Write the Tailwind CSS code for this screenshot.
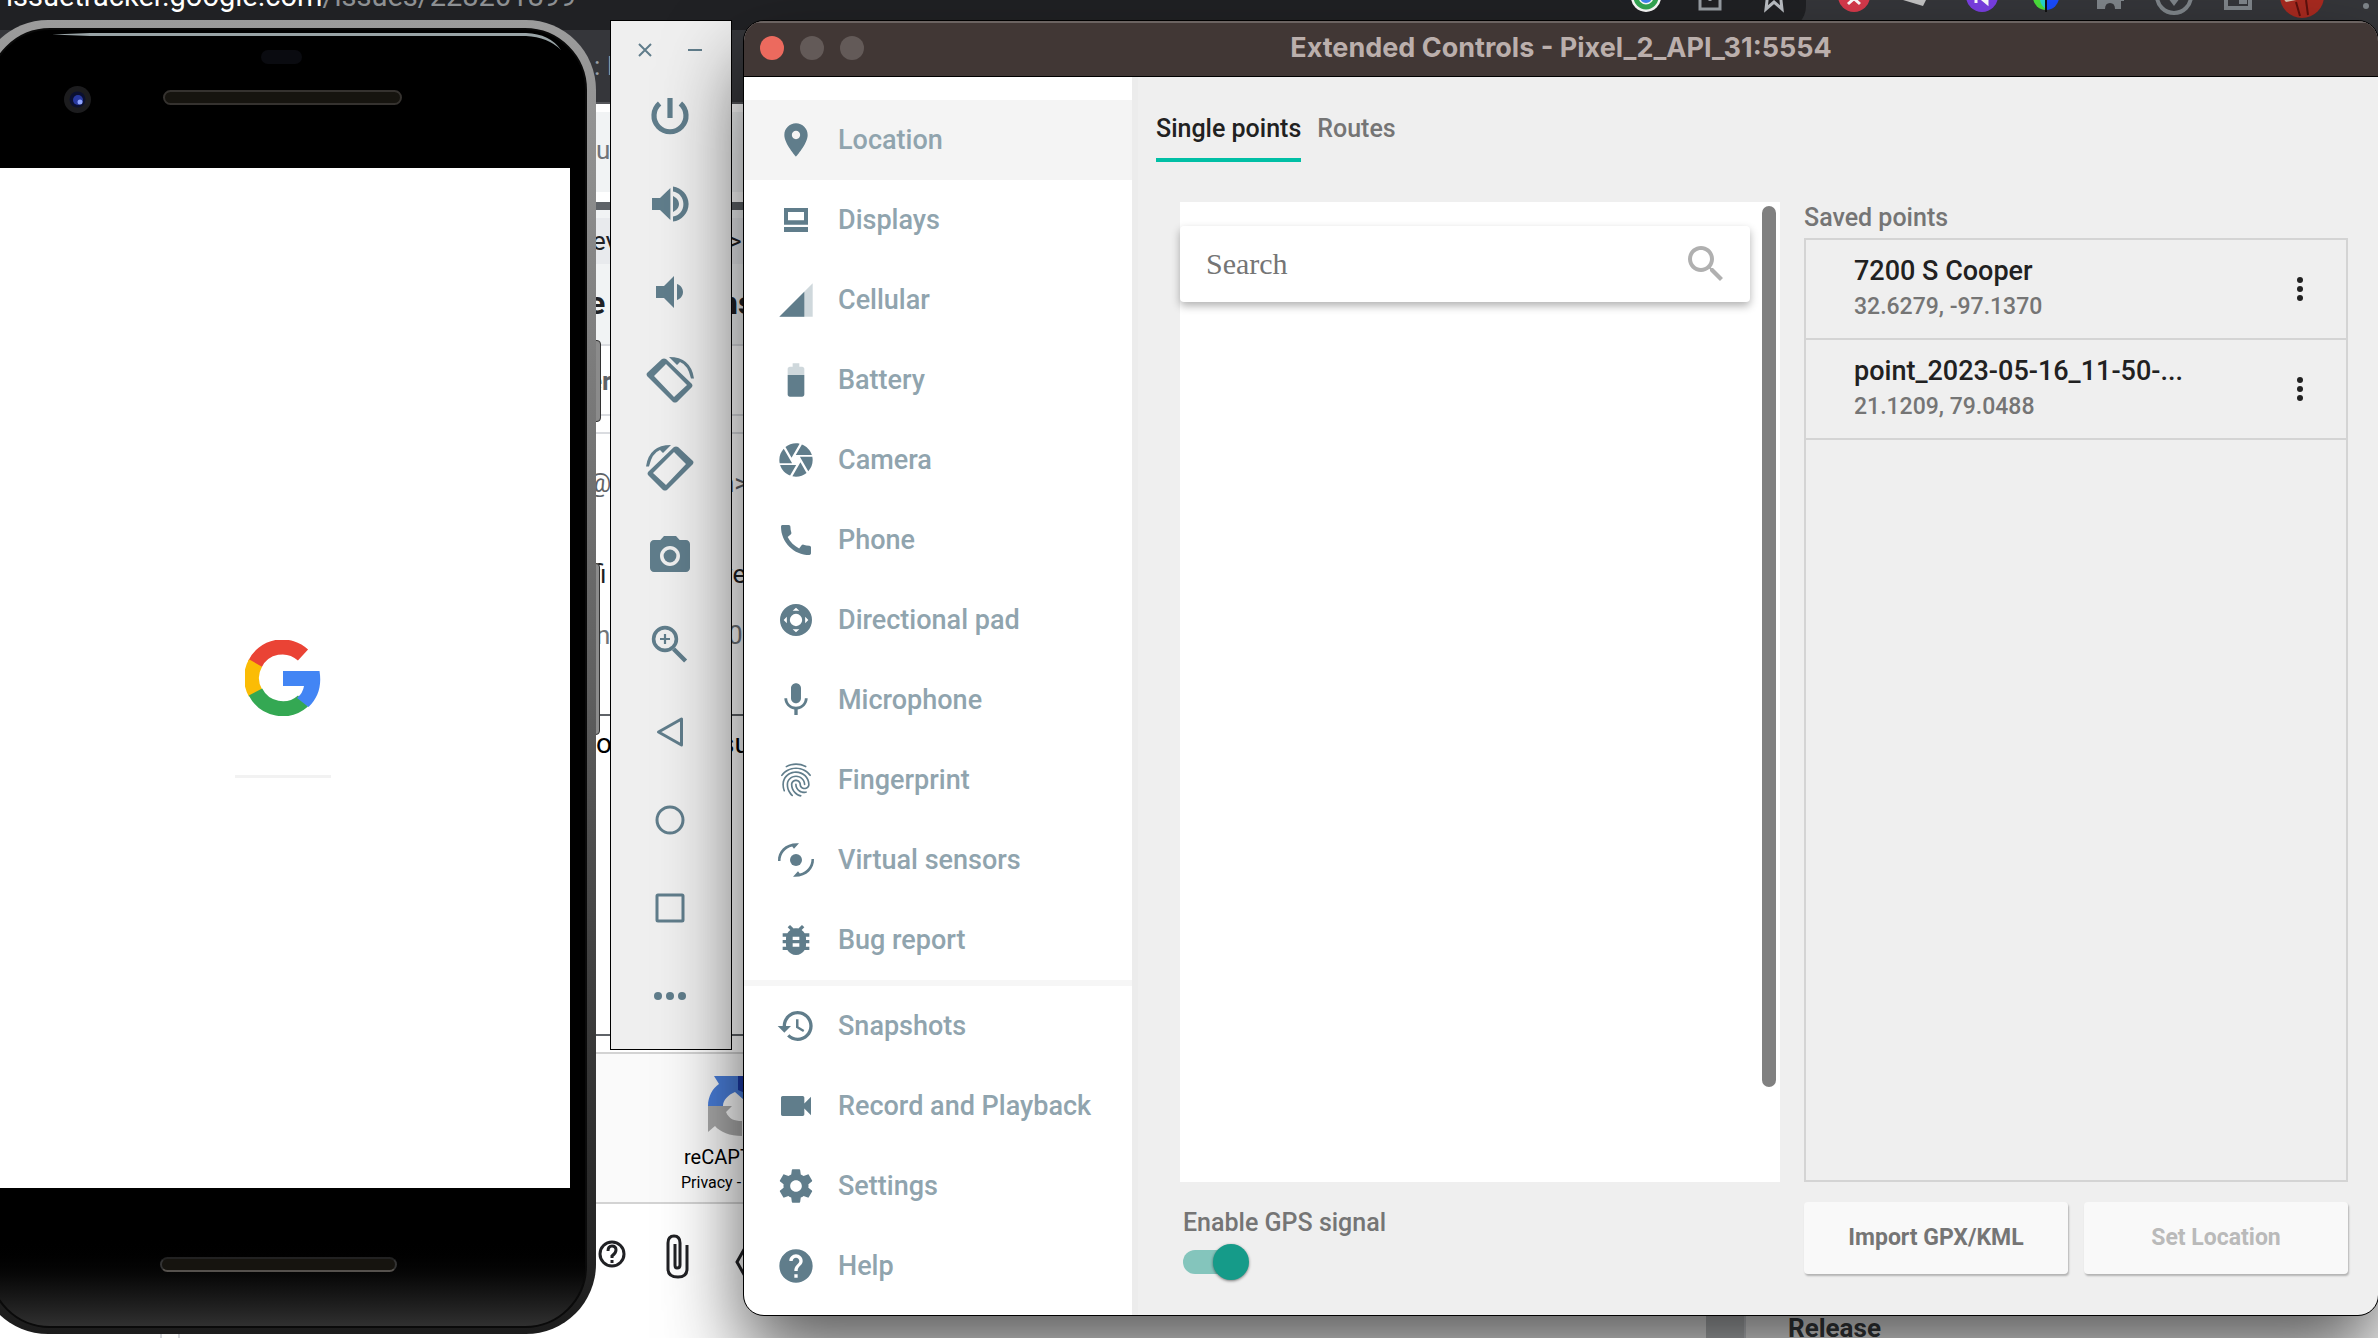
<!DOCTYPE html>
<html lang="en">
<head>
    <meta charset="UTF-8">
    <meta name="viewport" content="width=device-width, initial-scale=1.0">
    <title>Extended Controls - Pixel_2_API_31:5554</title>
    <script src="https://cdn.jsdelivr.net/npm/@tailwindcss/browser@4"></script>
</head>
<body class="bg-white font-[Roboto,sans-serif] overflow-hidden">
<div class="relative w-full h-screen overflow-hidden">

    <!-- Browser behind the emulator -->
    <div class="absolute inset-0">
        <header class="relative h-[102px] bg-[#35363a] overflow-hidden">
            <div class="w-[1806px] h-[30px] bg-[#202124] rounded-br-3xl"></div>
            <p class="absolute left-[6px] -top-[22px] text-[29px] leading-[36px] text-[#8d9093] whitespace-nowrap"><span class="text-white">issuetracker.google.com</span>/issues/228201899</p>
            <p class="absolute left-[594px] top-[50px] text-[26px] leading-[32px] text-[#9aa0a6]">: I</p>
            <svg class="absolute left-[1620px] top-0" width="758" height="20" viewBox="1620 0 758 20">
                <circle cx="1646" cy="-3" r="15" fill="#fff"/>
                <path d="M1636-3a10 10 0 0 0 20 0" fill="none" stroke="#34a853" stroke-width="5"/>
                <circle cx="1646" cy="-3" r="6" fill="#4285f4"/>
                <path d="M1700-5V9h20V-5M1710-5V1" fill="none" stroke="#9aa0a6" stroke-width="3"/>
                <path d="M1768-8l-2 17 8-7 8 7-2-17" fill="none" stroke="#bdc1c6" stroke-width="3"/>
                <circle cx="1854" cy="-4" r="16" fill="#d93a4c"/>
                <path d="M1848 4l10-9M1860 4l-10-9" stroke="#fff" stroke-width="3"/>
                <path d="M1903 0l20 6 5-10z" fill="#c4c4c4"/>
                <circle cx="1982" cy="-4" r="16" fill="#7b3fe4"/>
                <path d="M1976 3v-9l11 9v-9" fill="none" stroke="#fff" stroke-width="3"/>
                <path d="M2033-3a13 13 0 0 0 13 13V-3z" fill="#4be03c"/>
                <path d="M2059-3a13 13 0 0 1-13 13V-3z" fill="#1a4cff"/>
                <path d="M2040-3a13 13 0 0 0 6 12V-3z" fill="#25d7d0"/>
                <path d="M2046 0v12" stroke="#111" stroke-width="2"/>
                <path d="M2097-4v13h8q0-6 5-6t5 6h6V1h3v-5z" fill="#80868b"/>
                <circle cx="2174" cy="-4" r="17" fill="none" stroke="#80868b" stroke-width="4"/>
                <path d="M2168-2l6 8 6-8z" fill="#80868b"/>
                <path d="M2226-5V8h24V-5" fill="none" stroke="#80868b" stroke-width="4"/>
                <path d="M2239-5V4h8V-5z" fill="#80868b"/>
                <circle cx="2302" cy="-4" r="22" fill="#a92a20"/>
                <path d="M2281-4q4-8 14-4l7 8 6-10h15l-7 6-30 6z" fill="#d8c9b6"/>
                <path d="M2296 2l4 14M2306 0l2 15" stroke="#5e110d" stroke-width="2"/>
                <circle cx="2366" cy="6" r="3" fill="#80868b"/>
            </svg>
        </header>
        <!-- only the strips beside the emulator toolbar stay visible -->
        <div class="ml-[596px] w-[160px] whitespace-nowrap text-[26px] text-[#202124]">
            <div class="h-[10px] bg-white border-t-2 border-[#55565a]"></div>
            <div class="h-20 bg-[#f1f3f4] text-[#70757a] leading-[76px]">u</div>
            <div class="h-[10px] bg-white"></div>
            <div class="h-2 bg-[#5f6368]"></div>
            <div class="h-2 bg-[#f1f3f4]"></div>
            <div class="h-[46px] bg-[#e8eaed] grid grid-cols-[132px_1fr] leading-[46px]"><span class="-ml-1">ev</span><span>&gt;</span></div>
            <div class="h-[82px] bg-[#f1f3f4] border-b-2 border-[#dadce0] grid grid-cols-[124px_1fr] leading-[78px] font-bold text-[32px]"><span class="-ml-2">e</span><span>ns</span></div>
            <div class="h-[70px] bg-white border-b-2 border-[#dadce0] leading-[70px] font-bold text-[#5f6368]"><span class="-ml-2">er</span></div>
            <div class="h-[18px] bg-white border-b-2 border-[#dadce0]"></div>
            <div class="h-[98px] bg-white grid grid-cols-[124px_1fr] leading-[98px] text-[#5f6368]"><span class="-ml-2">@</span><span>n&gt;</span></div>
            <div class="h-[84px] bg-white grid grid-cols-[124px_1fr] leading-[84px]"><span class="-ml-1">fi</span><span>ve</span></div>
            <div class="h-[100px] bg-white border-b-2 border-[#5f6368] grid grid-cols-[132px_1fr] leading-[38px] text-[#70757a]"><span>n</span><span>01</span></div>
            <div class="h-[320px] bg-white border-b-2 border-[#5f6368] grid grid-cols-[124px_1fr] leading-[56px] text-[28px] text-black"><span>o</span><span>su</span></div>
            <div class="h-[16px] bg-white"></div>
            <div class="h-[152px] bg-[#fafafa] border-y-2 border-[#d3d3d3] pt-[22px] text-black">
                <svg class="ml-28" width="60" height="60" viewBox="0 0 60 60">
                    <path d="M0 30C0 20 5 12 11 8L6 0h30v24l-9-8c-7 3-12 8-12 14z" fill="#4a7fdc"/>
                    <path d="M30 0h14v20L30 14z" fill="#1c3aa9"/>
                    <path d="M0 30h24l-6 6c3 7 8 9 16 9v15C22 60 12 56 7 50l-7 6z" fill="#ababab"/>
                </svg>
                <p class="pl-[88px] text-[20px] leading-[42px]">reCAPTCHA</p>
                <p class="pl-[85px] text-[16px] leading-[10px]">Privacy - Terms</p>
            </div>
            <div class="h-[132px] bg-white">
                <svg width="160" height="100" viewBox="596 1204 160 100" fill="none" stroke="#202124" stroke-width="3">
                    <circle cx="612" cy="1254" r="12"/>
                    <path d="M608 1251q0-5 4-5t4 4q0 3-4 6v2M612 1260v3"/>
                    <path d="M687 1245v24q0 8-9 8-10 0-10-8v-26q0-7 6-7t6 7v22q0 3-3 3-2 0-2-3v-21"/>
                    <path d="M746 1246l-9 16 9 16"/>
                </svg>
            </div>
        </div>
        <!-- page footer strip -->
        <div class="absolute left-[160px] right-0 bottom-0 h-[22px] flex overflow-hidden">
            <span class="w-[20px] border-x-2 border-[#dadce0]"></span>
            <span class="ml-[1526px] w-10 bg-[#c4c7c9] border-r-2 border-[#dadce0]"></span>
            <p class="ml-[42px] -mt-[2px] text-[26px] leading-[28px] font-bold text-[#3c4043]">Release</p>
        </div>
    </div>

    <!-- Phone -->
    <div class="absolute left-[594px] top-[340px] w-[7px] h-[82px] bg-[#8b8b8b] border border-[#333] rounded-r-sm"></div>
    <div class="absolute left-[594px] top-[563px] w-[6px] h-[172px] bg-[#8b8b8b] border border-[#333] rounded-r-sm"></div>
    <div class="absolute -left-[22px] top-5 w-[618px] h-[1314px] rounded-[70px] bg-linear-to-b from-[#9c9c9c] via-[#606060] to-[#1c1c1c] pt-2 pr-[9px] pb-[6px] pl-[10px] flex">
        <div class="flex-1 rounded-[62px] bg-black bg-linear-to-t from-[#303030] to-black to-[90px] border-2 border-[#0a0a0a] flex flex-col overflow-hidden">
            <div class="h-[138px] relative">
                <svg class="absolute left-[10px] top-0" width="590" height="138" viewBox="0 30 590 138">
                    <path d="M52 34.500L90 33H526q24 1 35 17q-13-13-35-14H90z" fill="#98a3a6"/>
                    <rect x="261" y="50" width="41" height="14" rx="7" fill="#0a0b10"/>
                    <circle cx="77.500" cy="99.500" r="13.500" fill="#1c1c1e"/>
                    <circle cx="77.500" cy="99.500" r="8" fill="#0b1030"/>
                    <circle cx="78" cy="100" r="5" fill="#2839a0"/>
                    <circle cx="80" cy="102" r="2.500" fill="#8fa4ff"/>
                    <rect x="164" y="91" width="237" height="13" rx="6.500" fill="#16140f" stroke="#35322f" stroke-width="2"/>
                </svg>
            </div>
            <main class="h-[1020px] mr-[15px] bg-white flex flex-col items-center pt-[472px] pl-[6px]">
                <svg width="76" height="76" viewBox="0 0 76 76" fill="none" stroke-width="15">
                    <path d="M10 24A30.500 30.500 0 0 1 58 15" stroke="#ea4335"/>
                    <path d="M10.500 53A30.500 30.500 0 0 1 10.500 23" stroke="#fbbc05"/>
                    <path d="M58 61A30.500 30.500 0 0 1 10.500 52" stroke="#34a853"/>
                    <path d="M38 31H74.500C77 46 73 58 63.500 67L52 58q6-5 7-12H38z" fill="#4285f4"/>
                </svg>
                <div class="mt-[59px] w-24 h-[3px] bg-[#f2f2f2]"></div>
            </main>
            <div class="flex-1 pt-[69px] pl-[170px]">
                <div class="w-[237px] h-[15px] rounded-full bg-[#16140f] border-2 border-t-[#222] border-x-[#333] border-b-[#55514d]"></div>
            </div>
        </div>
    </div>

    <!-- Emulator toolbar -->
    <aside class="absolute left-[610px] top-5 w-[122px] h-[1030px] bg-[#efefef] border border-black pr-[2px] text-[#607d8b] flex flex-col items-center">
        <div class="h-[71px] pt-[22px] flex gap-9">
            <button aria-label="Close" class="size-[14px]"><svg width="14" height="14" viewBox="0 0 14 14" stroke="currentColor" stroke-width="2"><path d="M1 1l12 12M13 1L1 13"/></svg></button>
            <button aria-label="Minimize" class="size-[14px]"><svg width="14" height="14" viewBox="0 0 14 14" stroke="currentColor" stroke-width="2"><path d="M0 7h14"/></svg></button>
        </div>
        <div class="flex flex-col gap-10">
            <button aria-label="Power" class="size-12"><svg viewBox="0 0 24 24" fill="none" stroke="currentColor" stroke-width="2.600"><path d="M12 3v10M6.800 5.800a8 8 0 1 0 10.400 0"/></svg></button>
            <button aria-label="Volume up" class="size-12"><svg viewBox="0 0 24 24" fill="currentColor"><path d="M3 9v6h4l5.200 5V4L7 9H3zm10.500-1v8c1.700-.8 3-2.200 3-4s-1.300-3.200-3-4zM13.500 3.200v2.500c3 .4 5.200 3 5.200 6.300s-2.200 5.900-5.200 6.300v2.500c4.300-.5 7.800-4.300 7.800-8.800s-3.500-8.300-7.800-8.800z"/></svg></button>
            <button aria-label="Volume down" class="size-12"><svg viewBox="0 0 24 24" fill="currentColor"><path d="M5 9v6h4l5 5V4L9 9H5zm10.500-1v8c1.800-.5 3-2.200 3-4s-1.200-3.500-3-4z"/></svg></button>
            <button aria-label="Rotate left" class="size-12"><svg viewBox="0 0 48 48" fill="currentColor"><path fill-rule="evenodd" d="M1 20q-1-2 0-3L16 3q2-1 4 0L46 28q1 2 0 3L31 46q-2 1-4 0zM8 20L28 41 41 29 20 8z"/><path d="M23 1Q45 1 48 22.500H45Q42 9 34 6l-3 3z"/></svg></button>
            <button aria-label="Rotate right" class="size-12"><svg viewBox="0 0 48 48" fill="currentColor" class="-scale-x-100"><path fill-rule="evenodd" d="M1 20q-1-2 0-3L16 3q2-1 4 0L46 28q1 2 0 3L31 46q-2 1-4 0zM8 20L28 41 41 29 20 8z"/><path d="M23 1Q45 1 48 22.500H45Q42 9 34 6l-3 3z"/></svg></button>
            <button aria-label="Screenshot" class="size-12"><svg viewBox="0 0 24 24" fill="currentColor"><circle cx="12" cy="12" r="3.200"/><path d="M9 2L7.170 4H4c-1.100 0-2 .9-2 2v12c0 1.100.9 2 2 2h16c1.100 0 2-.9 2-2V6c0-1.100-.9-2-2-2h-3.170L15 2H9zm3 15c-2.760 0-5-2.240-5-5s2.240-5 5-5 5 2.240 5 5-2.240 5-5 5z"/></svg></button>
            <button aria-label="Zoom" class="size-12"><svg viewBox="0 0 24 24" fill="none" stroke="currentColor"><circle cx="9.500" cy="9.500" r="5.700" stroke-width="1.800"/><path d="M13.800 14.500L19.800 20.500" stroke-width="2.200"/><path d="M9.500 7v5M7 9.500h5" stroke-width="1.100"/></svg></button>
            <button aria-label="Back" class="size-12"><svg viewBox="0 0 48 48" fill="none" stroke="currentColor" stroke-width="3" stroke-linejoin="round"><path d="M12.500 24L35.500 11V37z"/></svg></button>
            <button aria-label="Home" class="size-12"><svg viewBox="0 0 48 48" fill="none" stroke="currentColor" stroke-width="3"><circle cx="24" cy="24" r="13"/></svg></button>
            <button aria-label="Overview" class="size-12"><svg viewBox="0 0 48 48" fill="none" stroke="currentColor" stroke-width="3"><rect x="11" y="11" width="26" height="26" rx="1"/></svg></button>
            <button aria-label="More" class="size-12"><svg viewBox="0 0 48 48" fill="currentColor"><circle cx="12" cy="24" r="4"/><circle cx="24" cy="24" r="4"/><circle cx="36" cy="24" r="4"/></svg></button>
        </div>
    </aside>

    <!-- Extended Controls window -->
    <div class="absolute left-[744px] right-0 top-[21px] bottom-[23px] rounded-[20px] bg-[#efefef] outline outline-black shadow-[0_40px_80px_rgba(0,0,0,0.65)] flex flex-col overflow-hidden">
        <header class="relative h-14 shrink-0 bg-[#413735] border-t-2 border-t-[#6b6361] border-b border-b-black pb-1 flex items-center justify-center">
            <div class="absolute left-4 flex gap-4">
                <button aria-label="Close window" class="size-6 rounded-full bg-[#ec6a5e]"></button>
                <button aria-label="Minimize window" class="size-6 rounded-full bg-[#635a58]"></button>
                <button aria-label="Zoom window" class="size-6 rounded-full bg-[#635a58]"></button>
            </div>
            <h1 class="font-[Inter,sans-serif] text-[27px] leading-8 font-bold text-[#bbafac]">Extended Controls - Pixel_2_API_31:5554</h1>
        </header>

        <div class="flex-1 flex min-h-0">
            <nav class="w-[388px] shrink-0 bg-white pt-[23px] text-[27px] font-medium text-[#90a4ae]">
                <button class="w-full h-20 pl-8 flex items-center gap-[22px] bg-[#f4f4f4]"><svg class="size-10 fill-[#607d8b]" viewBox="0 0 24 24"><path d="M12 2C8.130 2 5 5.130 5 9c0 5.250 7 13 7 13s7-7.750 7-13c0-3.870-3.130-7-7-7zm0 9.500c-1.380 0-2.500-1.120-2.500-2.500s1.120-2.500 2.500-2.500 2.500 1.120 2.500 2.500-1.120 2.500-2.500 2.500z"/></svg>Location</button>
                <button class="w-full h-20 pl-8 flex items-center gap-[22px]"><svg class="size-10 fill-[#607d8b]" viewBox="0 0 24 24"><path fill-rule="evenodd" d="M4.800 4.800h14.400v10H4.800zM7.200 7.200v5h9.600v-5zM4.800 16.200h14.400v3H4.800z"/></svg>Displays</button>
                <button class="w-full h-20 pl-8 flex items-center gap-[22px]"><svg class="size-10 fill-[#607d8b]" viewBox="0 0 24 24"><path fill-opacity=".3" d="M2 22h20V2z"/><path d="M17 7L2 22h15z"/></svg>Cellular</button>
                <button class="w-full h-20 pl-8 flex items-center gap-[22px]"><svg class="size-10 fill-[#607d8b]" viewBox="0 0 24 24"><path fill-opacity=".3" d="M17 5.330C17 4.600 16.400 4 15.670 4H14V2h-4v2H8.330C7.600 4 7 4.600 7 5.330V9h10V5.330z"/><path d="M7 9v11.670C7 21.400 7.600 22 8.330 22h7.330c.74 0 1.340-.6 1.340-1.330V9H7z"/></svg>Battery</button>
                <button class="w-full h-20 pl-8 flex items-center gap-[22px]"><svg class="size-10 fill-[#607d8b]" viewBox="0 0 24 24"><path d="M9.400 10.500l4.770-8.260C13.470 2.090 12.750 2 12 2c-2.400 0-4.600.85-6.320 2.250l3.660 6.350.06-.1zM21.540 9c-.92-2.920-3.150-5.260-6-6.340L11.880 9h9.660zm.26 1h-7.490l.29.5 4.760 8.250C21 16.970 22 14.610 22 12c0-.69-.07-1.350-.2-2zM8.540 12l-3.900-6.750C3.010 7.030 2 9.390 2 12c0 .69.07 1.350.2 2h7.490l-1.150-2zm-6.080 3c.92 2.920 3.150 5.260 6 6.340L12.120 15H2.460zm11.270 0l-3.900 6.760c.7.150 1.420.24 2.170.24 2.400 0 4.600-.85 6.320-2.250l-3.660-6.350-.93 1.600z"/></svg>Camera</button>
                <button class="w-full h-20 pl-8 flex items-center gap-[22px]"><svg class="size-10 fill-[#607d8b]" viewBox="0 0 24 24"><path d="M20.010 15.380c-1.230 0-2.420-.2-3.530-.56-.35-.12-.74-.03-1.010.24l-1.570 1.970c-2.830-1.350-5.480-3.900-6.890-6.830l1.950-1.660c.27-.28.35-.67.24-1.020-.37-1.110-.56-2.300-.56-3.530 0-.54-.45-.99-.99-.99H4.190C3.650 3 3 3.240 3 3.990 3 13.280 10.730 21 20.010 21c.71 0 .99-.63.99-1.180v-3.450c0-.54-.45-.99-.99-.99z"/></svg>Phone</button>
                <button class="w-full h-20 pl-8 flex items-center gap-[22px]"><svg class="size-10 fill-[#607d8b]" viewBox="0 0 24 24"><path fill-rule="evenodd" d="M12 2.400a9.600 9.600 0 1 0 0 19.200 9.600 9.600 0 0 0 0-19.200zM12 8.300a3.700 3.700 0 1 1 0 7.400 3.700 3.700 0 0 1 0-7.400zM12 4.600l2 1.900h-4zM12 19.400l2-1.900h-4zM4.600 12l1.900-2v4zM19.400 12l-1.900-2v4z"/></svg>Directional pad</button>
                <button class="w-full h-20 pl-8 flex items-center gap-[22px]"><svg class="size-10 fill-[#607d8b]" viewBox="0 0 24 24"><path d="M12 14c1.660 0 2.990-1.340 2.990-3L15 5c0-1.660-1.340-3-3-3S9 3.340 9 5v6c0 1.660 1.340 3 3 3zm5.300-3c0 3-2.540 5.100-5.300 5.100S6.700 14 6.700 11H5c0 3.410 2.720 6.230 6 6.720V21h2v-3.280c3.280-.48 6-3.300 6-6.720h-1.700z"/></svg>Microphone</button>
                <button class="w-full h-20 pl-8 flex items-center gap-[22px]"><svg class="size-10 fill-[#607d8b]" viewBox="0 0 24 24"><path d="M17.810 4.470c-.08 0-.16-.02-.23-.06C15.660 3.420 14 3 12.010 3c-1.980 0-3.860.47-5.570 1.410-.24.13-.54.04-.68-.2-.13-.24-.04-.55.2-.68C7.820 2.520 9.860 2 12.010 2c2.130 0 3.990.47 6.030 1.520.25.13.34.43.21.67-.09.18-.26.28-.44.28zM3.500 9.720c-.1 0-.2-.03-.29-.09-.23-.16-.28-.47-.12-.7.990-1.400 2.250-2.500 3.750-3.270C9.980 4.040 14 4.030 17.150 5.650c1.500.77 2.760 1.860 3.750 3.250.16.22.11.54-.12.7-.23.16-.54.11-.7-.12-.9-1.260-2.040-2.250-3.390-2.940-2.870-1.470-6.540-1.470-9.400.01-1.360.7-2.500 1.700-3.400 2.960-.08.14-.23.21-.39.21zm6.250 12.070c-.13 0-.26-.05-.35-.15-.87-.87-1.340-1.430-2.010-2.640-.69-1.230-1.050-2.730-1.050-4.340 0-2.970 2.540-5.390 5.660-5.390s5.660 2.420 5.660 5.390c0 .28-.22.5-.5.5s-.5-.22-.5-.5c0-2.420-2.090-4.390-4.660-4.390s-4.660 1.970-4.660 4.390c0 1.440.32 2.770.93 3.850.64 1.150 1.080 1.640 1.850 2.420.19.2.19.51 0 .71-.11.1-.24.15-.37.15zm7.170-1.850c-1.190 0-2.240-.3-3.100-.89-1.490-1.010-2.380-2.650-2.380-4.390 0-.28.22-.5.500-.5s.5.22.5.500c0 1.410.72 2.740 1.940 3.560.71.48 1.540.71 2.540.71.24 0 .64-.03 1.040-.1.27-.05.53.13.58.41.05.27-.13.53-.41.58-.57.110-1.070.12-1.210.12zM14.910 22c-.04 0-.09-.01-.13-.02-1.590-.44-2.630-1.030-3.720-2.100-1.400-1.390-2.170-3.240-2.170-5.220 0-1.620 1.380-2.940 3.080-2.940s3.080 1.320 3.080 2.940c0 1.070.93 1.940 2.080 1.940s2.080-.87 2.080-1.940c0-3.770-3.250-6.830-7.250-6.830-2.840 0-5.440 1.580-6.610 4.030-.39.810-.59 1.760-.59 2.800 0 .78.07 2.010.67 3.610.1.260-.03.550-.29.640-.26.1-.55-.04-.64-.29-.49-1.310-.73-2.610-.73-3.960 0-1.200.23-2.290.68-3.240 1.330-2.790 4.280-4.600 7.510-4.600 4.550 0 8.250 3.510 8.250 7.830 0 1.620-1.380 2.940-3.080 2.940s-3.080-1.320-3.080-2.940c0-1.070-.93-1.940-2.080-1.940s-2.080.87-2.080 1.940c0 1.710.66 3.310 1.870 4.510.95.94 1.860 1.460 3.270 1.850.27.070.42.350.350.610-.5.230-.26.380-.47.380z"/></svg>Fingerprint</button>
                <button class="w-full h-20 pl-8 flex items-center gap-[22px]"><svg class="size-10 fill-[#607d8b] overflow-visible" viewBox="0 0 24 24"><circle cx="12" cy="12" r="3.600"/><path d="M1.200 12.600C.9 6.500 6 1.400 13.800 2L10.800 5.200 9.700 3.900C5.500 5 2.700 8.300 2.700 12.600z"/><path d="M22.800 11.400C23.100 17.500 18 22.600 10.200 22L13.200 18.800 14.300 20.100C18.500 19 21.300 15.700 21.300 11.400z"/></svg>Virtual sensors</button>
                <button class="w-full h-20 pl-8 flex items-center gap-[22px]"><svg class="size-10 fill-[#607d8b]" viewBox="0 0 24 24"><path d="M20 8h-2.810c-.45-.78-1.070-1.450-1.820-1.960L17 4.410 15.590 3l-2.170 2.170C12.960 5.060 12.490 5 12 5c-.49 0-.96.06-1.410.17L8.410 3 7 4.410l1.620 1.630C7.880 6.550 7.260 7.220 6.810 8H4v2h2.090c-.05.33-.09.66-.09 1v1H4v2h2v1c0 .34.04.67.09 1H4v2h2.810c1.040 1.790 2.970 3 5.190 3s4.150-1.210 5.190-3H20v-2h-2.090c.05-.33.09-.66.09-1v-1h2v-2h-2v-1c0-.34-.04-.67-.09-1H20V8zm-6 8h-4v-2h4v2zm0-4h-4v-2h4v2z"/></svg>Bug report</button>
                <hr class="border-t-[6px] border-[#f6f6f6]">
                <button class="w-full h-20 pl-8 flex items-center gap-[22px]"><svg class="size-10 fill-[#607d8b]" viewBox="0 0 24 24"><path d="M13 3c-4.970 0-9 4.030-9 9H1l3.890 3.890.07.14L9 12H6c0-3.870 3.130-7 7-7s7 3.130 7 7-3.130 7-7 7c-1.930 0-3.680-.79-4.940-2.060l-1.420 1.420C8.270 19.990 10.510 21 13 21c4.970 0 9-4.030 9-9s-4.030-9-9-9zm-1 5v5l4.280 2.540.72-1.210-3.500-2.080V8H12z"/></svg>Snapshots</button>
                <button class="w-full h-20 pl-8 flex items-center gap-[22px]"><svg class="size-10 fill-[#607d8b]" viewBox="0 0 24 24"><path d="M17 10.500V7c0-.55-.45-1-1-1H4c-.55 0-1 .45-1 1v10c0 .55.45 1 1 1h12c.55 0 1-.45 1-1v-3.500l4 4v-11l-4 4z"/></svg>Record and Playback</button>
                <button class="w-full h-20 pl-8 flex items-center gap-[22px]"><svg class="size-10 fill-[#607d8b]" viewBox="0 0 24 24"><path d="M19.430 12.980c.04-.32.07-.64.07-.98s-.03-.66-.07-.98l2.110-1.650c.19-.15.24-.42.12-.64l-2-3.460c-.12-.22-.39-.3-.61-.22l-2.490 1c-.52-.4-1.080-.73-1.690-.98l-.38-2.650C14.460 2.180 14.250 2 14 2h-4c-.25 0-.46.18-.49.42l-.38 2.650c-.61.25-1.170.59-1.690.98l-2.490-1c-.23-.09-.49 0-.61.22l-2 3.460c-.13.22-.07.49.12.640l2.110 1.650c-.04.32-.07.65-.07.98s.03.66.07.98l-2.110 1.650c-.19.15-.24.42-.12.64l2 3.460c.12.22.39.3.61.22l2.490-1c.52.4 1.080.73 1.690.98l.38 2.650c.03.24.24.42.49.42h4c.25 0 .46-.18.49-.42l.38-2.650c.61-.25 1.170-.59 1.690-.98l2.490 1c.23.09.49 0 .61-.22l2-3.460c.12-.22.07-.49-.12-.64l-2.110-1.650zM12 15.500c-1.930 0-3.500-1.570-3.500-3.500s1.570-3.500 3.500-3.500 3.500 1.570 3.500 3.500-1.570 3.500-3.500 3.500z"/></svg>Settings</button>
                <button class="w-full h-20 pl-8 flex items-center gap-[22px]"><svg class="size-10 fill-[#607d8b]" viewBox="0 0 24 24"><path d="M12 2C6.480 2 2 6.480 2 12s4.480 10 10 10 10-4.480 10-10S17.520 2 12 2zm1 17h-2v-2h2v2zm2.070-7.750l-.9.920C13.450 12.900 13 13.500 13 15h-2v-.5c0-1.100.45-2.100 1.170-2.830l1.240-1.260c.37-.36.59-.86.59-1.410 0-1.100-.9-2-2-2s-2 .9-2 2H8c0-2.210 1.790-4 4-4s4 1.790 4 4c0 .88-.36 1.680-.93 2.250z"/></svg>Help</button>
            </nav>

            <section class="flex-1 min-w-0 border-l-[6px] border-[#ececec] flex flex-col text-[25px] font-medium text-[#757575]">
                <div class="pt-7 pl-[18px] flex gap-4">
                    <button class="h-[57px] pb-[6px] border-b-4 border-[#00bfa5] text-[#212121]">Single points</button>
                    <button class="h-[57px] pb-[6px] border-b-4 border-transparent">Routes</button>
                </div>

                <div class="flex-1 min-h-0 mt-10 ml-[42px] mr-[30px] grid grid-cols-[600fr_544fr] gap-6">
                    <!-- Map area -->
                    <div class="bg-white pt-6 flex relative">
                        <form class="w-[95%] h-[76px] rounded bg-white shadow-[0_4px_8px_rgba(0,0,0,0.3)] flex items-center pl-[26px] pr-5">
                            <input type="text" aria-label="Search" placeholder="Search" class="flex-1 min-w-0 pb-[2px] outline-none font-['Liberation_Serif',serif] font-normal text-[30px] placeholder:text-[#757575]">
                            <button type="button" aria-label="Search map" class="size-12"><svg viewBox="0 0 24 24" fill="#b0b0b0"><path d="M15.500 14h-.79l-.28-.27C15.410 12.590 16 11.110 16 9.500 16 5.910 13.090 3 9.500 3S3 5.910 3 9.500 5.910 16 9.500 16c1.610 0 3.090-.59 4.230-1.570l.27.280v.79l5 4.990L20.490 19l-4.990-5zm-6 0C7.010 14 5 11.990 5 9.500S7.010 5 9.500 5 14 7.010 14 9.500 11.990 14 9.500 14z"/></svg></button>
                        </form>
                        <div class="absolute right-1 top-1 bottom-[95px] w-[14px] rounded-full bg-[#808080]"></div>
                    </div>
                    <!-- Saved points -->
                    <div class="flex flex-col">
                        <h2 class="h-9 leading-8">Saved points</h2>
                        <ul class="flex-1 border-2 border-[#d4d4d4]">
                            <li class="h-[100px] pl-12 pr-[26px] border-b-2 border-[#d4d4d4] flex items-center justify-between">
                                <div>
                                    <p class="text-[27px] leading-9 text-[#212121]">7200 S Cooper</p>
                                    <p class="text-[23px] leading-9">32.6279, -97.1370</p>
                                </div>
                                <button aria-label="Point options" class="w-10 h-10"><svg viewBox="0 0 40 40" fill="#212121"><circle cx="20" cy="11" r="3"/><circle cx="20" cy="20" r="3"/><circle cx="20" cy="29" r="3"/></svg></button>
                            </li>
                            <li class="h-[100px] pl-12 pr-[26px] border-b-2 border-[#d4d4d4] flex items-center justify-between">
                                <div>
                                    <p class="text-[27px] leading-9 text-[#212121]">point_2023-05-16_11-50-...</p>
                                    <p class="text-[23px] leading-9">21.1209, 79.0488</p>
                                </div>
                                <button aria-label="Point options" class="w-10 h-10"><svg viewBox="0 0 40 40" fill="#212121"><circle cx="20" cy="11" r="3"/><circle cx="20" cy="20" r="3"/><circle cx="20" cy="29" r="3"/></svg></button>
                            </li>
                        </ul>
                    </div>
                </div>

                <div class="h-[113px] mt-5 ml-[42px] mr-[30px] grid grid-cols-[600fr_544fr] gap-6">
                    <div class="pl-[3px] flex flex-col items-start">
                        <label for="gps" class="leading-[42px]">Enable GPS signal</label>
                        <input id="gps" type="checkbox" checked class="appearance-none relative w-[66px] h-9 before:absolute before:left-0 before:top-[6px] before:w-14 before:h-6 before:rounded-full before:bg-[#84c5bc] after:absolute after:right-0 after:top-0 after:size-9 after:rounded-full after:bg-[#159b89] after:shadow-[0_1px_3px_rgba(0,0,0,0.5)]">
                    </div>
                    <div class="h-[72px] grid grid-cols-2 gap-4 text-[23px] font-bold">
                        <button class="rounded bg-[#f9f9f9] shadow-[1px_2px_2px_rgba(0,0,0,0.25)]">Import GPX/KML</button>
                        <button disabled class="rounded bg-[#f9f9f9] shadow-[1px_2px_2px_rgba(0,0,0,0.25)] text-[#bababa]">Set Location</button>
                    </div>
                </div>
            </section>
        </div>
    </div>
</div>
</body>
</html>
